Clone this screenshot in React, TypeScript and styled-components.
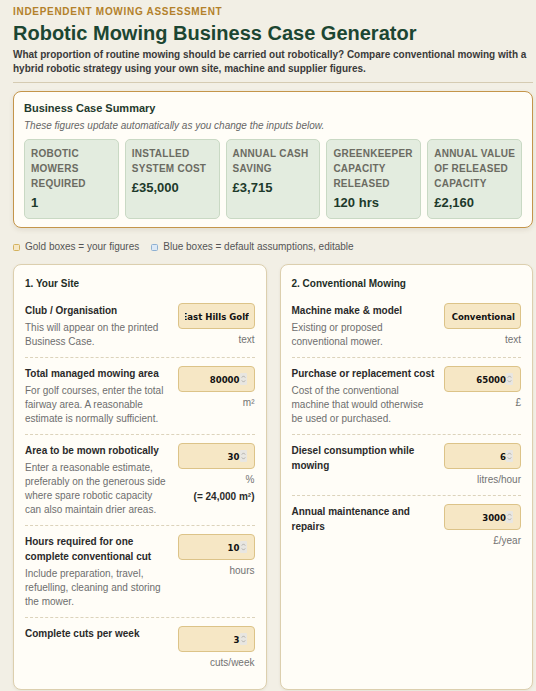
import React, { useEffect, useRef, useState } from "react";
import styled, { createGlobalStyle } from "styled-components";

const GlobalStyle = createGlobalStyle`
  html, body { margin: 0; padding: 0; }
  body {
    background: #f2efe5;
    font-family: "Liberation Sans", Arial, sans-serif;
    color: #2a2a2a;
  }
  * { box-sizing: border-box; }
`;

const Page = styled.div`
  padding: 6px 3px 8px 13px;
`;

const Header = styled.header`
  padding-bottom: 6px;
  border-bottom: 1px solid #d5cbb2;
`;

const Kicker = styled.div`
  font-size: 10px;
  line-height: 12px;
  font-weight: 700;
  letter-spacing: 0.7px;
  color: #b3812b;
  text-transform: uppercase;
`;

const Title = styled.h1`
  margin: 3px 0 3px;
  font-size: 20px;
  line-height: 24px;
  font-weight: 700;
  color: #1c4632;
`;

const Subtitle = styled.p`
  margin: 0;
  font-size: 10px;
  line-height: 14px;
  font-weight: 700;
  color: #3a3a3a;
`;

const Summary = styled.section`
  margin-top: 8px;
  background: #fffdf7;
  border: 1px solid #c4954a;
  border-radius: 8px;
  padding: 9px 10px 8px;
  box-shadow: 0 2px 5px rgba(90, 70, 30, 0.1);
`;

const SummaryTitle = styled.h2`
  margin: 0;
  font-size: 11px;
  line-height: 14px;
  font-weight: 700;
  color: #1f3a2c;
`;

const SummaryNote = styled.p`
  margin: 4px 0 6px;
  font-size: 10px;
  line-height: 14px;
  font-style: italic;
  color: #666;
`;

const StatGrid = styled.div`
  display: grid;
  grid-template-columns: repeat(5, 1fr);
  gap: 6px;
`;

const StatBox = styled.div`
  background: #e3ecdf;
  border: 1px solid #c9d9c4;
  border-radius: 5px;
  padding: 6px 6px 7px;
`;

const StatLabel = styled.div`
  margin-right: -5px;
  font-size: 10px;
  line-height: 15px;
  font-weight: 700;
  letter-spacing: 0.25px;
  text-transform: uppercase;
  color: #6b6b62;
`;

const StatValue = styled.div`
  margin-top: 4px;
  font-size: 13px;
  line-height: 16px;
  font-weight: 700;
  color: #1d3a2b;
`;

const Legend = styled.div`
  margin: 12px 0 10px;
  display: flex;
  gap: 12px;
  font-size: 10px;
  line-height: 14px;
  color: #555;
`;

const LegendItem = styled.span`
  display: inline-flex;
  align-items: center;
  gap: 5px;
`;

const Swatch = styled.span<{ $tone: "gold" | "blue" }>`
  width: 7px;
  height: 7px;
  border-radius: 1.5px;
  border: 1px solid ${(p) => (p.$tone === "gold" ? "#d4b25e" : "#8eb0d2")};
  background: ${(p) => (p.$tone === "gold" ? "#f6e7c5" : "#dde9f5")};
`;

const Cards = styled.div`
  display: grid;
  grid-template-columns: 1fr 1fr;
  gap: 13px;
`;

const Card = styled.section`
  background: #fffdf7;
  border: 1px solid #dccfae;
  border-radius: 8px;
  padding: 12px 11px 11px;
  box-shadow: 0 1px 3px rgba(90, 70, 30, 0.08);
`;

const CardTitle = styled.h3`
  margin: 0 0 12px;
  font-size: 10px;
  line-height: 14px;
  font-weight: 700;
  color: #1e2e26;
`;

const Row = styled.div`
  display: grid;
  grid-template-columns: 1fr 77px;
  column-gap: 8px;
  padding: 8px 0;
  border-bottom: 1px dashed #dcd3bb;
  &:first-of-type { padding-top: 0; }
  &:last-child { border-bottom: none; }
`;

const FieldText = styled.div`
  min-width: 0;
`;

const FieldLabel = styled.div`
  font-size: 10px;
  line-height: 15px;
  font-weight: 700;
  color: #2a2a2a;
`;

const FieldDesc = styled.div`
  margin-top: 3px;
  font-size: 10px;
  line-height: 14px;
  color: #6e6e6e;
`;

const FieldControl = styled.div`
  display: flex;
  flex-direction: column;
  align-items: flex-end;
`;

const InputWrap = styled.div`
  position: relative;
  width: 100%;
`;

const Input = styled.input<{ $numeric: boolean }>`
  display: block;
  width: 100%;
  height: 26px;
  background: #f6e7c5;
  border: 1px solid #dcc388;
  border-radius: 4px;
  padding: ${(p) => (p.$numeric ? "0 14px 0 6px" : "0 5px 0 6px")};
  text-align: right;
  font-family: "DejaVu Sans Condensed", "DejaVu Sans", sans-serif;
  font-stretch: condensed;
  font-size: 9.5px;
  font-weight: 700;
  color: #111;
  outline: none;
  -moz-appearance: textfield;
  &::-webkit-inner-spin-button,
  &::-webkit-outer-spin-button {
    -webkit-appearance: none;
    margin: 0;
  }
`;

const Spinner = styled.svg`
  position: absolute;
  right: 8px;
  top: 50%;
  transform: translateY(-50%);
  pointer-events: none;
`;

const Unit = styled.div`
  margin-top: 4px;
  font-size: 10px;
  line-height: 14px;
  color: #737373;
`;

const Computed = styled.div`
  margin-top: 3px;
  font-size: 10px;
  line-height: 14px;
  font-weight: 700;
  color: #2a2a2a;
`;

type FieldProps = {
  label: string;
  desc?: string;
  unit: string;
  value: string | number;
  type?: "text" | "number";
  onChange: (v: string) => void;
  extra?: React.ReactNode;
};

function Field({ label, desc, unit, value, type = "number", onChange, extra }: FieldProps) {
  const ref = useRef<HTMLInputElement>(null);
  useEffect(() => {
    const el = ref.current;
    if (el && type === "text" && document.activeElement !== el) {
      el.scrollLeft = el.scrollWidth;
    }
  }, [value, type]);
  const numeric = type === "number";
  return (
    <Row>
      <FieldText>
        <FieldLabel>{label}</FieldLabel>
        {desc && <FieldDesc>{desc}</FieldDesc>}
      </FieldText>
      <FieldControl>
        <InputWrap>
          <Input
            ref={ref}
            type={type}
            $numeric={numeric}
            value={value}
            onChange={(e) => onChange(e.target.value)}
          />
          {numeric && (
            <Spinner width="7" height="12" viewBox="0 0 7 12" aria-hidden="true">
              <rect x="0" y="0" width="7" height="12" rx="1" fill="#e8e6e1" />
              <path d="M1.8 4.6 L3.5 2.9 L5.2 4.6" fill="none" stroke="#a3a19c" strokeWidth="0.8" />
              <path d="M1.8 7.4 L3.5 9.1 L5.2 7.4" fill="none" stroke="#a3a19c" strokeWidth="0.8" />
            </Spinner>
          )}
        </InputWrap>
        <Unit>{unit}</Unit>
        {extra}
      </FieldControl>
    </Row>
  );
}

const stats = [
  { label: "Robotic mowers required", value: "1" },
  { label: "Installed system cost", value: "£35,000" },
  { label: "Annual cash saving", value: "£3,715" },
  { label: "Greenkeeper capacity released", value: "120 hrs" },
  { label: "Annual value of released capacity", value: "£2,160" },
];

export default function App() {
  const [club, setClub] = useState("East Hills Golf");
  const [area, setArea] = useState("80000");
  const [pct, setPct] = useState("30");
  const [hours, setHours] = useState("10");
  const [cuts, setCuts] = useState("3");
  const [machine, setMachine] = useState("Conventional");
  const [cost, setCost] = useState("65000");
  const [diesel, setDiesel] = useState("6");
  const [maint, setMaint] = useState("3000");

  const roboArea = Math.round((Number(area) || 0) * (Number(pct) || 0) / 100);

  return (
    <>
      <GlobalStyle />
      <Page>
        <Header>
          <Kicker>Independent Mowing Assessment</Kicker>
          <Title>Robotic Mowing Business Case Generator</Title>
          <Subtitle>
            What proportion of routine mowing should be carried out robotically? Compare conventional mowing with a
            hybrid robotic strategy using your own site, machine and supplier figures.
          </Subtitle>
        </Header>

        <Summary>
          <SummaryTitle>Business Case Summary</SummaryTitle>
          <SummaryNote>These figures update automatically as you change the inputs below.</SummaryNote>
          <StatGrid>
            {stats.map((s) => (
              <StatBox key={s.label}>
                <StatLabel>{s.label}</StatLabel>
                <StatValue>{s.value}</StatValue>
              </StatBox>
            ))}
          </StatGrid>
        </Summary>

        <Legend>
          <LegendItem>
            <Swatch $tone="gold" />
            Gold boxes = your figures
          </LegendItem>
          <LegendItem>
            <Swatch $tone="blue" />
            Blue boxes = default assumptions, editable
          </LegendItem>
        </Legend>

        <Cards>
          <Card>
            <CardTitle>1. Your Site</CardTitle>
            <Field
              label="Club / Organisation"
              desc="This will appear on the printed Business Case."
              unit="text"
              type="text"
              value={club}
              onChange={setClub}
            />
            <Field
              label="Total managed mowing area"
              desc="For golf courses, enter the total fairway area. A reasonable estimate is normally sufficient."
              unit="m²"
              value={area}
              onChange={setArea}
            />
            <Field
              label="Area to be mown robotically"
              desc="Enter a reasonable estimate, preferably on the generous side where spare robotic capacity can also maintain drier areas."
              unit="%"
              value={pct}
              onChange={setPct}
              extra={<Computed>(= {roboArea.toLocaleString("en-GB")} m²)</Computed>}
            />
            <Field
              label="Hours required for one complete conventional cut"
              desc="Include preparation, travel, refuelling, cleaning and storing the mower."
              unit="hours"
              value={hours}
              onChange={setHours}
            />
            <Field label="Complete cuts per week" unit="cuts/week" value={cuts} onChange={setCuts} />
          </Card>

          <Card>
            <CardTitle>2. Conventional Mowing</CardTitle>
            <Field
              label="Machine make & model"
              desc="Existing or proposed conventional mower."
              unit="text"
              type="text"
              value={machine}
              onChange={setMachine}
            />
            <Field
              label="Purchase or replacement cost"
              desc="Cost of the conventional machine that would otherwise be used or purchased."
              unit="£"
              value={cost}
              onChange={setCost}
            />
            <Field label="Diesel consumption while mowing" unit="litres/hour" value={diesel} onChange={setDiesel} />
            <Field label="Annual maintenance and repairs" unit="£/year" value={maint} onChange={setMaint} />
          </Card>
        </Cards>
      </Page>
    </>
  );
}
